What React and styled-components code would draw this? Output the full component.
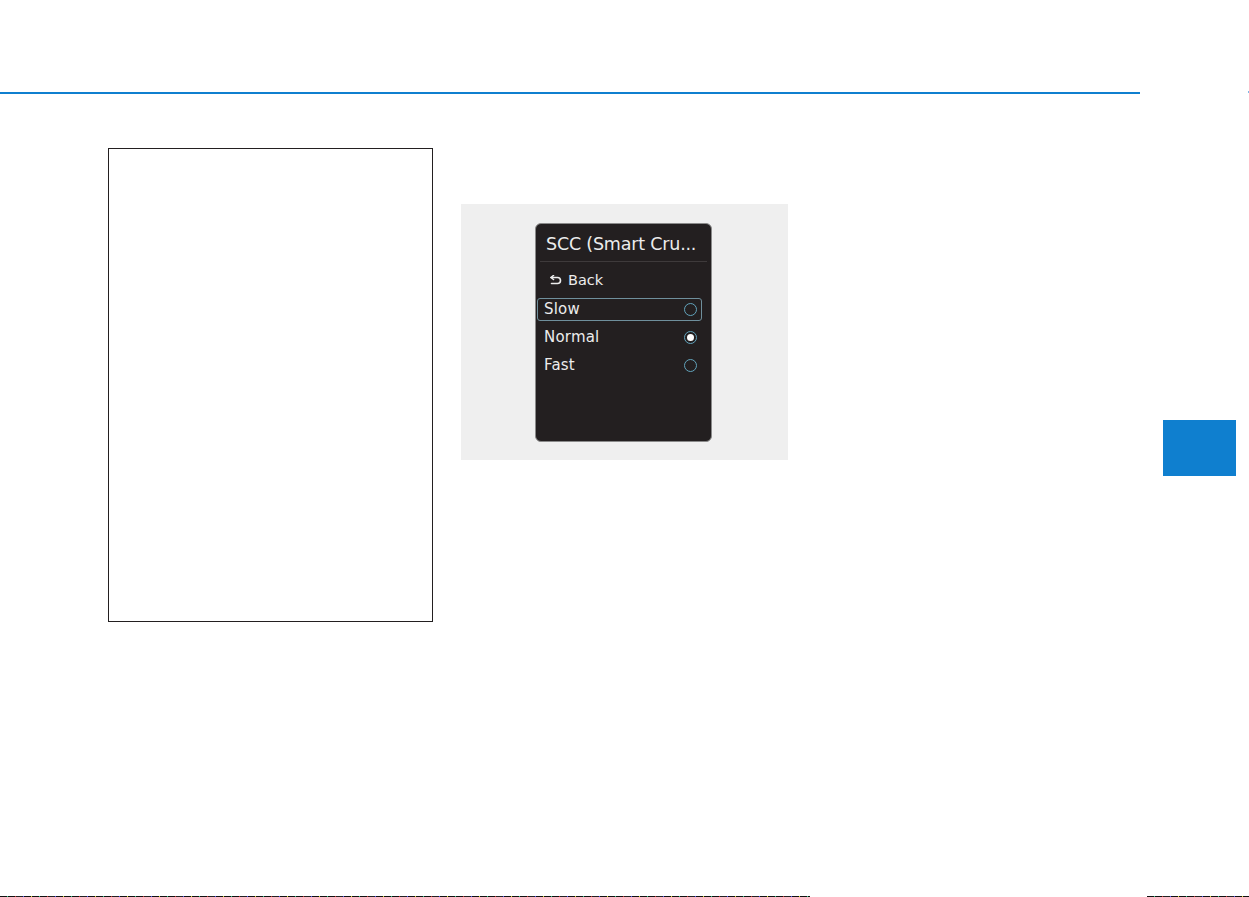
import React from "react";
import styled, { createGlobalStyle } from "styled-components";

const Global = createGlobalStyle`
  html, body { margin: 0; padding: 0; background: #ffffff; }
  body { font-family: "Liberation Sans", Arial, sans-serif; }
`;

const Page = styled.div`
  width: 1249px;
  min-height: 897px;
  display: flex;
  flex-direction: column;
  overflow: hidden;
`;

const Header = styled.header`
  height: 92px;
  flex: none;
`;

const RuleRow = styled.div`
  display: flex;
  align-items: flex-start;
  height: 2px;
`;

const BlueRule = styled.div`
  width: 1140px;
  height: 2px;
  background: #0f7fcf;
`;

const EdgeMark = styled.div`
  margin-left: auto;
  width: 1px;
  height: 2px;
  margin-top: -1px;
  background: #7fb8e6;
`;

const Content = styled.main`
  display: flex;
  align-items: flex-start;
  padding-left: 108px;
  margin-top: 54px;
`;

const NoteBox = styled.section`
  box-sizing: border-box;
  width: 325px;
  height: 474px;
  border: 1.5px solid #231f20;
`;

const FigurePanel = styled.figure`
  margin: 56px 0 0 28px;
  box-sizing: border-box;
  width: 327px;
  height: 256px;
  background: #efefef;
  display: flex;
  align-items: center;
  justify-content: flex-start;
  padding-left: 74px;
`;

const Screen = styled.div`
  box-sizing: border-box;
  width: 177px;
  height: 219px;
  background: #231f20;
  border: 1px solid #8a8a8a;
  border-radius: 6px;
  padding: 0 1px;
  display: flex;
  flex-direction: column;
  color: #ececec;
  font-family: "DejaVu Sans", "Liberation Sans", sans-serif;
`;

const Title = styled.div`
  height: 37px;
  line-height: 40px;
  padding-left: 9px;
  font-size: 17.5px;
  white-space: nowrap;
  letter-spacing: -0.2px;
`;

const Divider = styled.div`
  height: 1px;
  margin: 0 3px;
  background: #3e3a3b;
`;

const BackRow = styled.div`
  height: 36px;
  display: flex;
  align-items: center;
  gap: 6px;
  padding-left: 12px;
  font-size: 14.5px;
`;

const Options = styled.div`
  display: flex;
  flex-direction: column;
  gap: 5px;
  padding-right: 8px;
`;

const Option = styled.div`
  box-sizing: border-box;
  height: 23px;
  display: flex;
  align-items: center;
  justify-content: space-between;
  padding: 0 4px 0 6px;
  font-size: 15px;
  letter-spacing: 0.2px;
  border-radius: 3px;
  border: 1px solid ${(p) => (p.$focused ? "#6f8f9c" : "transparent")};
`;

const Radio = styled.span`
  box-sizing: border-box;
  width: 13px;
  height: 13px;
  border-radius: 50%;
  border: 1.5px solid #62a3bb;
  display: flex;
  align-items: center;
  justify-content: center;
  &::after {
    content: "";
    width: 7px;
    height: 7px;
    border-radius: 50%;
    background: ${(p) => (p.$checked ? "#ffffff" : "transparent")};
  }
`;

const SideTab = styled.div`
  margin: 272px 13px 0 auto;
  width: 73px;
  height: 56px;
  background: #0f7fcf;
`;

const Footer = styled.footer`
  margin-top: auto;
  height: 1px;
  display: flex;
`;

const PrintStrip = styled.div`
  width: ${(p) => p.$w}px;
  margin-left: ${(p) => p.$offset || 0}px;
  height: 1px;
  background: repeating-linear-gradient(
    90deg,
    #111 0 7px,
    #3c8 7px 8px,
    #111 8px 15px,
    #c33 15px 16px,
    #222 16px 23px,
    #55f 23px 24px,
    #111 24px 31px,
    #dd3 31px 32px
  );
`;

function BackIcon() {
  return (
    <svg width="13" height="10" viewBox="0 0 13 10" fill="none">
      <path
        d="M2 2.5H8.5A3 3 0 0 1 8.5 8.5H2.5"
        stroke="#ececec"
        strokeWidth="1.6"
        strokeLinecap="round"
      />
      <path
        d="M4.5 0.5L2 2.5L4.5 4.5"
        stroke="#ececec"
        strokeWidth="1.6"
        strokeLinecap="round"
        strokeLinejoin="round"
      />
    </svg>
  );
}

const options = [
  { label: "Slow", focused: true, checked: false },
  { label: "Normal", focused: false, checked: true },
  { label: "Fast", focused: false, checked: false },
];

export default function App() {
  return (
    <>
      <Global />
      <Page>
        <Header />
        <RuleRow>
          <BlueRule />
          <EdgeMark />
        </RuleRow>
        <Content>
          <NoteBox />
          <FigurePanel>
            <Screen>
              <Title>SCC (Smart Cru...</Title>
              <Divider />
              <BackRow>
                <BackIcon />
                <span>Back</span>
              </BackRow>
              <Options>
                {options.map((o) => (
                  <Option key={o.label} $focused={o.focused}>
                    <span>{o.label}</span>
                    <Radio $checked={o.checked} />
                  </Option>
                ))}
              </Options>
            </Screen>
          </FigurePanel>
          <SideTab />
        </Content>
        <Footer>
          <PrintStrip $w={810} />
          <PrintStrip $w={102} $offset={337} />
        </Footer>
      </Page>
    </>
  );
}
